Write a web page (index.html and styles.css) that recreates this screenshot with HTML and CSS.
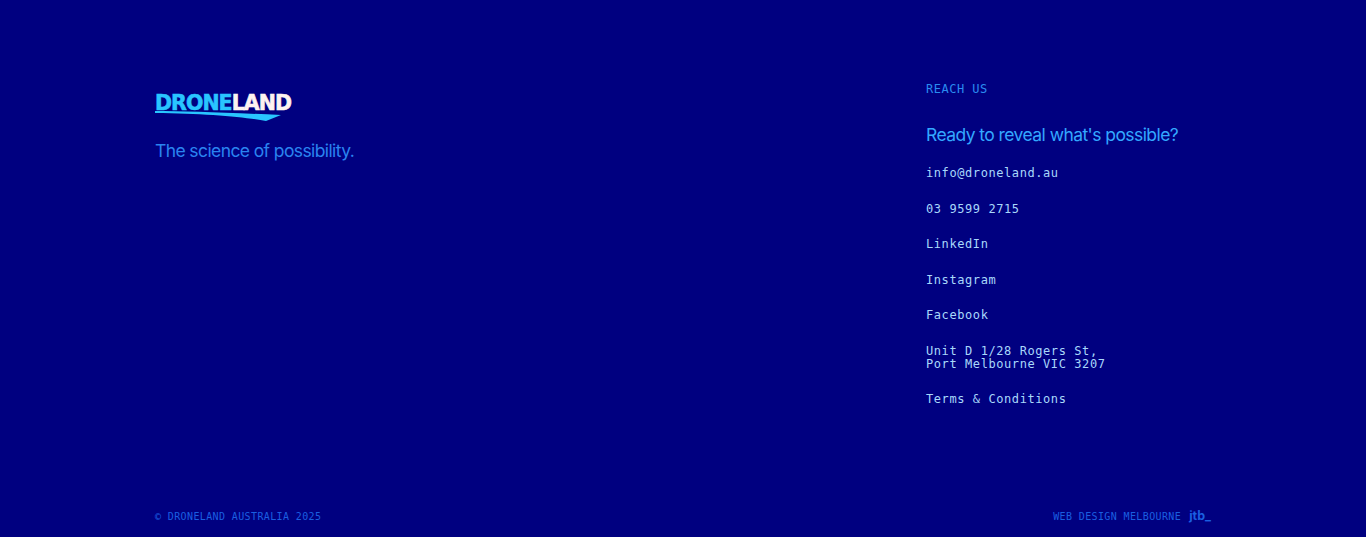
FILE: index.html
```html
<!DOCTYPE html>
<html lang="en">
<head>
  <meta charset="UTF-8">
  <meta name="viewport" content="width=device-width, initial-scale=1.0">
  <title>Droneland</title>
  <link rel="stylesheet" href="styles.css">
</head>
<body>
  <div class="main">
    <div class="brand">
      <div class="logo">
        <span class="logo-text"><span class="logo-blue">DRONE</span><span class="logo-white">LAND</span></span>
        <svg class="logo-swoosh" width="136" height="14" viewBox="0 0 136 14">
          <path d="M0 3 C30 3 70 4.5 126 7 L111 13 C90 9 50 5.5 0 5 Z" fill="#29c5ff" />
        </svg>
      </div>
      <p class="tagline">The science of possibility.</p>
    </div>

    <div class="contact">
      <div class="label">REACH US</div>
      <h2 class="heading">Ready to reveal what's possible?</h2>
      <ul class="links">
        <li>info@droneland.au</li>
        <li>03 9599 2715</li>
        <li>LinkedIn</li>
        <li>Instagram</li>
        <li>Facebook</li>
        <li>Unit D 1/28 Rogers St,<br>Port Melbourne VIC 3207</li>
        <li>Terms &amp; Conditions</li>
      </ul>
    </div>
  </div>

  <div class="footer">
    <span>© DRONELAND AUSTRALIA 2025</span>
    <span class="credit">WEB DESIGN MELBOURNE<span class="jtb">jtb_</span></span>
  </div>
</body>
</html>
```

FILE: styles.css
```css
* { margin: 0; padding: 0; box-sizing: border-box; }
html, body {
  background-color: #000080;
  height: 100vh;
  overflow: hidden;
}
body {
  display: flex;
  flex-direction: column;
  justify-content: space-between;
  font-family: "DejaVu Sans Mono", monospace;
}
.main {
  display: flex;
  justify-content: space-between;
  padding: 83px 155px 0;
}
.brand {
  padding-top: 10px;
}
.logo {
  position: relative;
  width: 137px;
  height: 27px;
}
.logo-text {
  display: block;
  font-family: "DejaVu Sans", sans-serif;
  font-weight: 700;
  font-size: 20.5px;
  line-height: 21px;
  letter-spacing: -0.95px;
  -webkit-text-stroke: 0.6px;
}
.logo-blue { color: #29c5ff; }
.logo-white { color: #fdf3f0; }
.logo-swoosh {
  position: absolute;
  left: 0;
  top: 15px;
}
.tagline {
  margin-top: 18px;
  font-family: Inter, sans-serif;
  font-size: 17.5px;
  line-height: 26px;
  letter-spacing: -0.6px;
  color: #2a84f0;
}
.contact {
  width: 285px;
}
.label {
  font-size: 12px;
  line-height: 12px;
  letter-spacing: 0.5px;
  color: #2a8cf0;
}
.heading {
  margin-top: 28px;
  font-family: Inter, sans-serif;
  font-weight: 400;
  font-size: 17.5px;
  line-height: 24px;
  letter-spacing: -0.57px;
  color: #33a8ff;
}
.links {
  list-style: none;
  margin-top: 20px;
  display: flex;
  flex-direction: column;
  gap: 22.5px;
  font-size: 12px;
  line-height: 13px;
  letter-spacing: 0.58px;
  color: #a9d8fb;
}
.footer {
  display: flex;
  justify-content: space-between;
  align-items: center;
  padding: 0 155px 13px;
  font-size: 10px;
  line-height: 14px;
  letter-spacing: 0.38px;
  color: #1a5fe0;
}
.jtb {
  margin-left: 8px;
  font-family: Inter, sans-serif;
  font-weight: 700;
  font-size: 12.5px;
  letter-spacing: 0;
}
```
